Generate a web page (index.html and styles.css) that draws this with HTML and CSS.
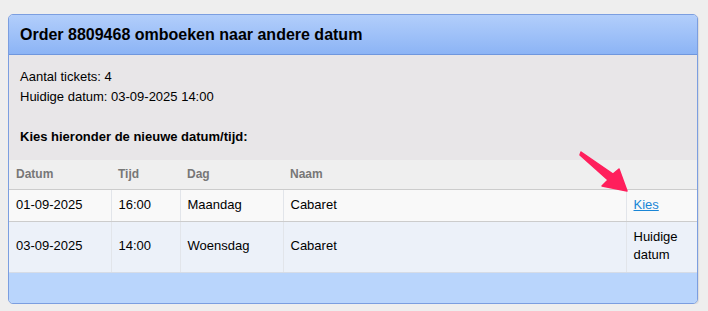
FILE: index.html
```html
<!DOCTYPE html>
<html lang="nl">
    <head>
        <meta charset="UTF-8">
        <title>Order omboeken</title>
        <link rel="stylesheet" href="styles.css">
    </head>
    <body>
        <div class="panel">
            <div class="panel-header">Order 8809468 omboeken naar andere datum</div>

            <div class="panel-info">
                <p>Aantal tickets: 4</p>
                <p>Huidige datum: 03-09-2025 14:00</p>
                <p class="choose">Kies hieronder de nieuwe datum/tijd:</p>
            </div>

            <table class="dates">
                <colgroup>
                    <col class="c-datum">
                    <col class="c-tijd">
                    <col class="c-dag">
                    <col class="c-naam">
                    <col class="c-actie">
                </colgroup>
                <thead>
                    <tr>
                        <th>Datum</th>
                        <th>Tijd</th>
                        <th>Dag</th>
                        <th>Naam</th>
                        <th></th>
                    </tr>
                </thead>
                <tbody>
                    <tr>
                        <td>01-09-2025</td>
                        <td>16:00</td>
                        <td>Maandag</td>
                        <td>Cabaret</td>
                        <td><a href="#">Kies</a></td>
                    </tr>
                    <tr class="current">
                        <td>03-09-2025</td>
                        <td>14:00</td>
                        <td>Woensdag</td>
                        <td>Cabaret</td>
                        <td>Huidige datum</td>
                    </tr>
                </tbody>
            </table>

            <div class="panel-footer"></div>
        </div>

        <svg class="pointer" width="60" height="50" viewBox="0 0 60 50">
            <polygon points="6,4 38,26 44,21 52,43 27,38 33,32 5,7" fill="#ff1f5c" stroke="#ff1f5c" stroke-width="1.5" stroke-linejoin="round"/>
        </svg>
    </body>
</html>
```

FILE: styles.css
```css
* {
    margin: 0;
    padding: 0;
    box-sizing: border-box;
}

body {
    background-color: #eeeeee;
    font-family: "Liberation Sans", Arial, sans-serif;
    font-size: 13px;
    color: #000;
    padding: 14px 0 0 8px;
}

.panel {
    width: 690px;
    border: 1px solid #7b9ee0;
    border-radius: 5px;
    overflow: hidden;
    background-color: #e8e6e8;
    box-shadow: 1px 1px 1px rgba(0, 0, 0, 0.08);
}

.panel-header {
    height: 40px;
    line-height: 39px;
    padding-left: 11px;
    font-size: 16px;
    font-weight: bold;
    background: linear-gradient(#b2cefb, #8cb4f5);
    border-bottom: 1px solid #6f97de;
}

.panel-info {
    padding: 12px 11px 13px;
    line-height: 20px;
}

.panel-info .choose {
    margin-top: 20px;
    font-weight: bold;
}

.dates {
    width: 688px;
    border-collapse: collapse;
    table-layout: fixed;
}

.c-datum { width: 102px; }
.c-tijd { width: 69px; }
.c-dag { width: 103px; }
.c-naam { width: 343px; }
.c-actie { width: 71px; }

.dates th {
    height: 29px;
    padding: 0 7px;
    text-align: left;
    font-size: 12px;
    color: #777;
    background-color: #efefef;
    border-bottom: 1px solid #cccccc;
}

.dates td {
    padding: 6px 7px 7px;
    line-height: 18px;
    vertical-align: middle;
    background-color: #f9f9f9;
    border-right: 1px solid #e2e5ea;
    border-bottom: 1px solid #cccccc;
}

.dates td:last-child {
    border-right: none;
}

.dates tr.current td {
    padding-bottom: 8px;
    background-color: #ecf1f9;
    border-bottom: 1px solid #d6dce6;
}

.dates a {
    color: #1a86d6;
}

.panel-footer {
    height: 30px;
    background-color: #b9d5fc;
}

.pointer {
    position: absolute;
    left: 575px;
    top: 148px;
}
```
